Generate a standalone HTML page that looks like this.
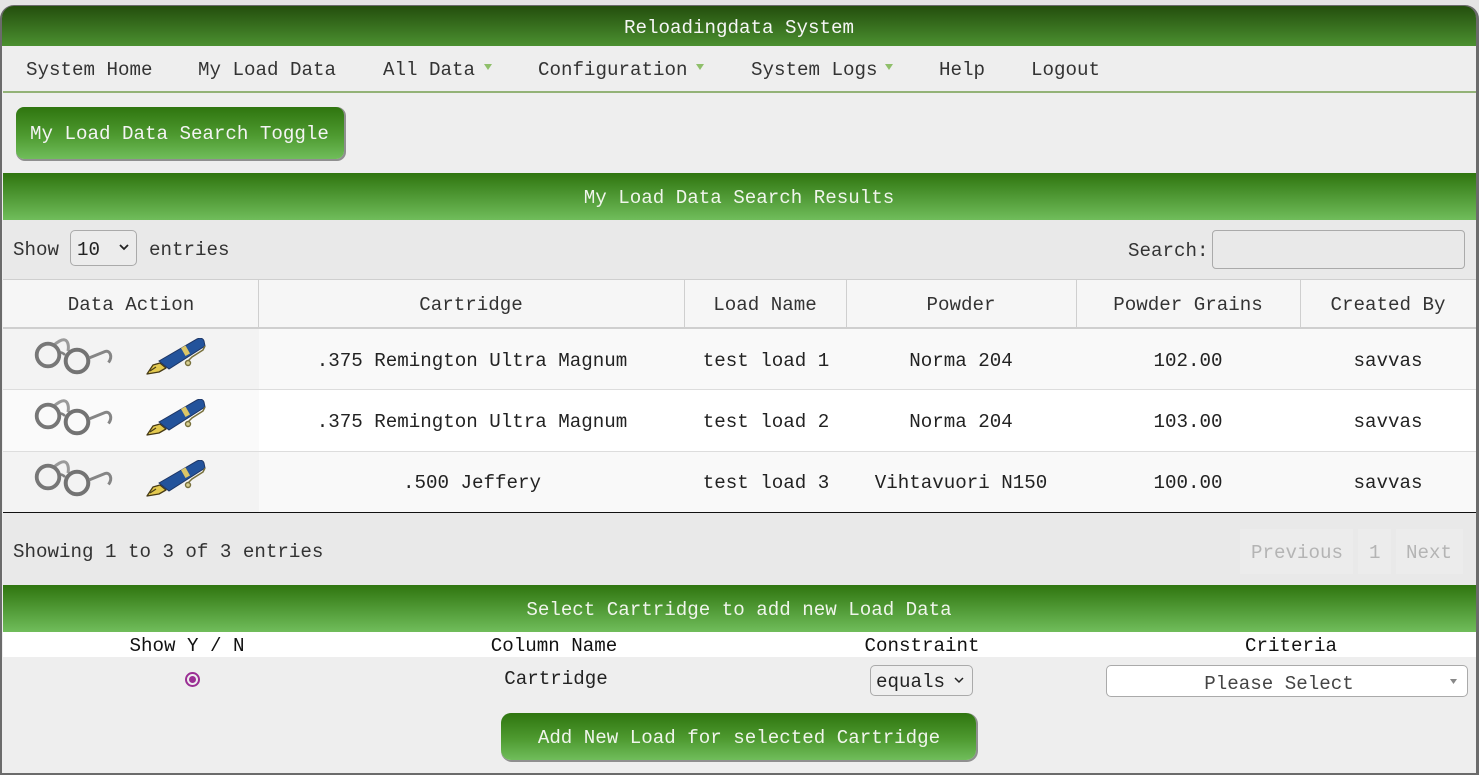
<!DOCTYPE html>
<html><head><meta charset="utf-8"><style>
*{box-sizing:border-box}
html,body{margin:0;padding:0;width:1479px;height:775px;overflow:hidden;background:#e4e4e4}
body{position:relative;font-family:"Liberation Mono",monospace;font-size:19.17px;color:#333}
.a{position:absolute}
.t{position:absolute;white-space:pre;line-height:24px;height:24px;margin-top:1px}
.c{text-align:center;transform:translateX(-50%)}
.bar{position:absolute;left:3px;width:1473px;background:linear-gradient(#2f750f,#70bd5b);color:#f4f4f4}
.btn{position:absolute;background:linear-gradient(#2f750f 0%,#4e9a30 55%,#70bd5b 100%);border-radius:8px;box-shadow:1px 1px 0 1px #8f8f8f;color:#f4f4f4}
.cell{position:absolute;background:#f9f9f9;left:3px;width:1473px}
.vl{position:absolute;width:1px;background:#cfcfcf;top:279px;height:49px}
svg.i{filter:blur(.35px)}
</style></head><body>
<div class="a" style="left:0;top:5px;width:1479px;height:770px;background:#eee;border:2px solid #6b6b6b;border-right-width:3px;border-radius:14px 14px 0 0;border-bottom-width:2px"></div>
<div class="a" style="left:2px;top:6px;width:1474px;height:40px;background:linear-gradient(#234e0d,#4b9030);border-radius:12px 12px 0 0"></div>
<div class="t c" style="left:739px;top:15px;color:#f6f6f6">Reloadingdata System</div>

<div class="a" style="left:3px;top:91px;width:1473px;height:2px;background:#93b277"></div>
<div class="t" style="left:26px;top:57px">System Home</div>
<div class="t" style="left:198px;top:57px">My Load Data</div>
<div class="t" style="left:383px;top:57px">All Data</div>
<div class="t" style="left:538px;top:57px">Configuration</div>
<div class="t" style="left:751px;top:57px">System Logs</div>
<div class="t" style="left:939px;top:57px">Help</div>
<div class="t" style="left:1031px;top:57px">Logout</div>
<svg class="a" style="left:0;top:60px" width="900" height="14"><g fill="#8fbf6a"><path d="M484 4h8l-4 6z"/><path d="M696 4h8l-4 6z"/><path d="M885 4h8l-4 6z"/></g></svg>

<div class="btn" style="left:16px;top:107px;width:328px;height:52px"></div>
<div class="t" style="left:30px;top:121px;color:#f4f4f4">My Load Data Search Toggle</div>

<div class="bar" style="top:173px;height:47px"></div>
<div class="t c" style="left:739px;top:185px;color:#f0f5ec">My Load Data Search Results</div>

<div class="a" style="left:3px;top:220px;width:1473px;height:59px;background:#e9e9e9"></div>
<div class="t" style="left:13px;top:237px">Show</div>
<div class="a" style="left:70px;top:230px;width:67px;height:36px;border:1px solid #aaa;border-radius:5px;background:#ececec"></div>
<div class="t" style="left:77px;top:237px;color:#222">10</div>
<svg class="a" style="left:118px;top:243px" width="12" height="10"><path d="M2 2l4 4 4-4" fill="none" stroke="#222" stroke-width="1.8"/></svg>
<div class="t" style="left:149px;top:237px">entries</div>
<div class="t" style="left:1128px;top:238px">Search:</div>
<div class="a" style="left:1212px;top:230px;width:253px;height:39px;border:1px solid #aaa;border-radius:4px;background:#e9e9e9"></div>

<div class="a" style="left:3px;top:279px;width:1473px;height:50px;background:#f6f6f6;border-top:1px solid #cfcfcf;border-bottom:2px solid #cfcfcf"></div>
<div class="vl" style="left:258px"></div><div class="vl" style="left:684px"></div><div class="vl" style="left:846px"></div><div class="vl" style="left:1076px"></div><div class="vl" style="left:1300px"></div>
<div class="t c" style="left:131px;top:292px">Data Action</div>
<div class="t c" style="left:471px;top:292px">Cartridge</div>
<div class="t c" style="left:765px;top:292px">Load Name</div>
<div class="t c" style="left:961px;top:292px">Powder</div>
<div class="t c" style="left:1188px;top:292px">Powder Grains</div>
<div class="t c" style="left:1388px;top:292px">Created By</div>

<div class="cell" style="top:329px;height:60px"></div>
<div class="a" style="left:3px;top:329px;width:256px;height:60px;background:#f3f3f3"></div>
<div class="cell" style="top:390px;height:61px;background:#fff"></div>
<div class="a" style="left:3px;top:390px;width:256px;height:61px;background:#fafafa"></div>
<div class="cell" style="top:452px;height:60px"></div>
<div class="a" style="left:3px;top:452px;width:256px;height:60px;background:#f3f3f3"></div>
<div class="a" style="left:3px;top:389px;width:1473px;height:1px;background:#ddd"></div>
<div class="a" style="left:3px;top:451px;width:1473px;height:1px;background:#ddd"></div>
<div class="a" style="left:3px;top:512px;width:1473px;height:1px;background:#111"></div>

<svg width="0" height="0" style="position:absolute"><defs>
<g id="gl" fill="none">
<path d="M19 8c4-4 9-7 12-6 3 1 4 6 3 11" stroke="#9a9a9a" stroke-width="3"/>
<path d="M25 15c2-1 4 0 6 2" stroke="#808080" stroke-width="2.6"/>
<circle cx="14" cy="17" r="11.300" stroke="#777" stroke-width="3.800"/>
<circle cx="43" cy="23" r="11.300" stroke="#737373" stroke-width="4"/>
<path d="M55 20L71 13.500c5-1.500 8 5 3.500 11" stroke="#858585" stroke-width="3"/>
</g>
<g id="pn">
<path d="M1 36L7 27 14 25 20 30 13 34z" fill="#e3c94f" stroke="#463a14" stroke-width="1.300" stroke-linejoin="round"/>
<path d="M4 33l6-4" stroke="#463a14" stroke-width="1.200"/>
<path d="M13 23L51 1c3-1.500 6-1 7 2l1 5-36 23z" fill="#23539b" stroke="#1d3564" stroke-width="1"/>
<path d="M35 10l4.500-2.500 4.500 8-4.500 2.500z" fill="#dcc667"/>
<path d="M59 8L57 12 46 19 42 23" fill="none" stroke="#77703c" stroke-width="1.500"/>
<circle cx="42" cy="25" r="2.500" fill="#d8cf90" stroke="#77703c" stroke-width="1.400"/>
</g>
</defs></svg>
<svg class="a i" style="left:34px;top:338px" width="80" height="40"><use href="#gl"/></svg>
<svg class="a i" style="left:146px;top:338px" width="60" height="38"><use href="#pn"/></svg>
<svg class="a i" style="left:34px;top:399px" width="80" height="40"><use href="#gl"/></svg>
<svg class="a i" style="left:146px;top:399px" width="60" height="38"><use href="#pn"/></svg>
<svg class="a i" style="left:34px;top:460px" width="80" height="40"><use href="#gl"/></svg>
<svg class="a i" style="left:146px;top:460px" width="60" height="38"><use href="#pn"/></svg>

<div style="color:#222">
<div class="t c" style="left:472px;top:348px">.375 Remington Ultra Magnum</div>
<div class="t c" style="left:766px;top:348px">test load 1</div>
<div class="t c" style="left:961px;top:348px">Norma 204</div>
<div class="t c" style="left:1188px;top:348px">102.00</div>
<div class="t c" style="left:1388px;top:348px">savvas</div>
<div class="t c" style="left:472px;top:409px">.375 Remington Ultra Magnum</div>
<div class="t c" style="left:766px;top:409px">test load 2</div>
<div class="t c" style="left:961px;top:409px">Norma 204</div>
<div class="t c" style="left:1188px;top:409px">103.00</div>
<div class="t c" style="left:1388px;top:409px">savvas</div>
<div class="t c" style="left:472px;top:470px">.500 Jeffery</div>
<div class="t c" style="left:766px;top:470px">test load 3</div>
<div class="t c" style="left:961px;top:470px">Vihtavuori N150</div>
<div class="t c" style="left:1188px;top:470px">100.00</div>
<div class="t c" style="left:1388px;top:470px">savvas</div>
</div>

<div class="a" style="left:3px;top:513px;width:1473px;height:72px;background:#e9e9e9"></div>
<div class="t" style="left:13px;top:539px">Showing 1 to 3 of 3 entries</div>
<div class="a" style="left:1240px;top:529px;width:113px;height:45px;background:#ececec"></div>
<div class="a" style="left:1358px;top:529px;width:33px;height:45px;background:#ececec"></div>
<div class="a" style="left:1396px;top:529px;width:67px;height:45px;background:#ececec"></div>
<div class="t" style="left:1251px;top:540px;color:#b4b4b4">Previous</div>
<div class="t" style="left:1369px;top:540px;color:#b4b4b4">1</div>
<div class="t" style="left:1406px;top:540px;color:#b4b4b4">Next</div>

<div class="bar" style="top:585px;height:47px"></div>
<div class="t c" style="left:739px;top:597px;color:#f0f5ec">Select Cartridge to add new Load Data</div>
<div class="a" style="left:3px;top:632px;width:1473px;height:25px;background:#fff"></div>
<div style="color:#111">
<div class="t c" style="left:187px;top:633px">Show Y / N</div>
<div class="t c" style="left:554px;top:633px">Column Name</div>
<div class="t c" style="left:922px;top:633px">Constraint</div>
<div class="t c" style="left:1291px;top:633px">Criteria</div>
</div>
<div class="a" style="left:185px;top:672px;width:15px;height:15px;border:2px solid #9b2f94;border-radius:50%;background:#eee"></div>
<div class="a" style="left:189px;top:676px;width:7px;height:7px;border-radius:50%;background:#9b2f94"></div>
<div class="t c" style="left:556px;top:666px;color:#222">Cartridge</div>
<div class="a" style="left:870px;top:665px;width:103px;height:31px;border:1px solid #aaa;border-radius:5px;background:#efefef"></div>
<div class="t" style="left:876px;top:669px;color:#222">equals</div>
<svg class="a" style="left:953px;top:676px" width="12" height="9"><path d="M2 2l4 4 4-4" fill="none" stroke="#222" stroke-width="1.500"/></svg>
<div class="a" style="left:1106px;top:665px;width:362px;height:32px;border:1px solid #aaa;border-radius:5px;background:#fff"></div>
<div class="t c" style="left:1279px;top:671px;color:#444">Please Select</div>
<svg class="a" style="left:1449px;top:678px" width="10" height="8"><path d="M1 1h7l-3.500 5z" fill="#888"/></svg>

<div class="btn" style="left:501px;top:713px;width:475px;height:47px;border-radius:10px"></div>
<div class="t c" style="left:739px;top:725px;color:#f0f5ec">Add New Load for selected Cartridge</div>
</body></html>
